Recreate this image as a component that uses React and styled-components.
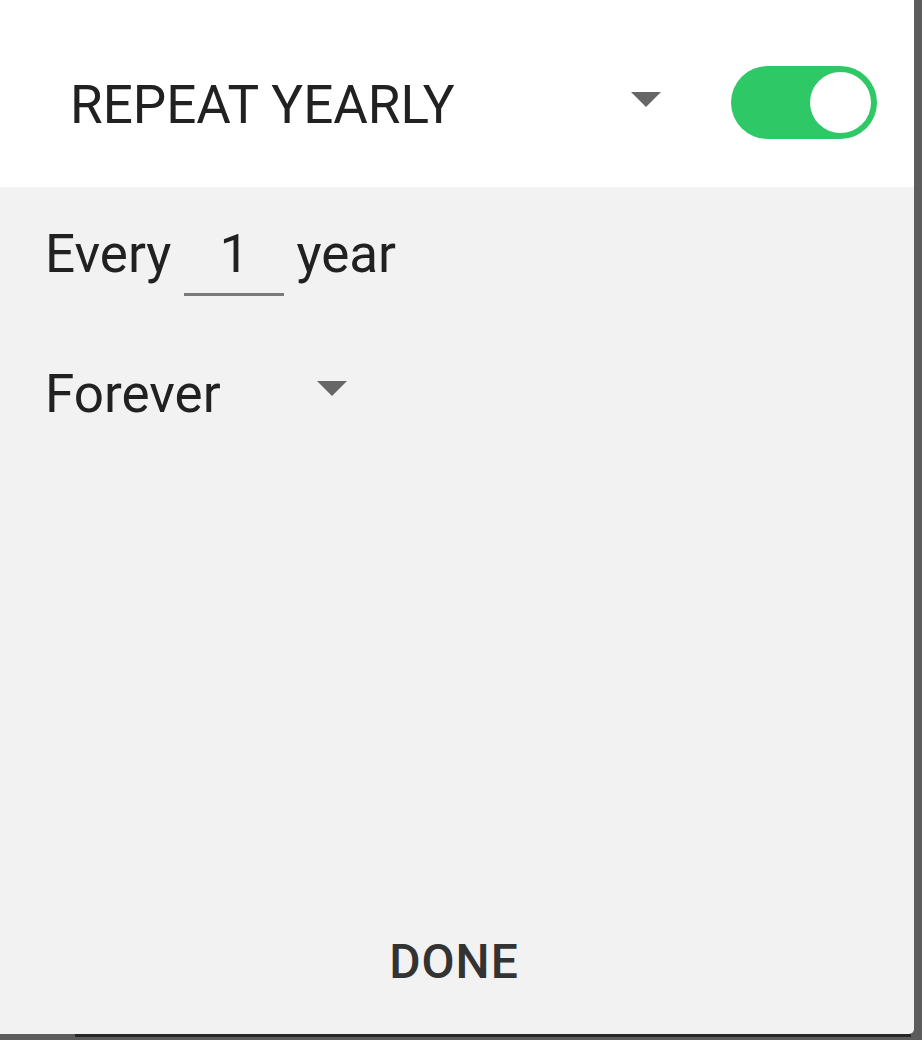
import styled, { createGlobalStyle } from "styled-components";

const GlobalStyle = createGlobalStyle`
  html, body {
    margin: 0;
    padding: 0;
    background: #5c5c5c;
  }
  body {
    font-family: Roboto, "Liberation Sans", sans-serif;
  }
`;

const Page = styled.div`
  width: 922px;
  height: 1040px;
  overflow: hidden;
  display: flex;
  flex-direction: column;
`;

const Dialog = styled.div`
  width: 914px;
  height: 1034px;
  background: #f2f2f2;
  border-bottom-right-radius: 5px;
  display: flex;
  flex-direction: column;
  flex-shrink: 0;
`;

const ShadowEdge = styled.div`
  margin-left: 75px;
  width: 836px;
  height: 3px;
  background: #262626;
`;

const Header = styled.div`
  height: 187px;
  background: #ffffff;
  display: flex;
  align-items: center;
  padding: 18px 37px 0 70px;
  box-sizing: border-box;
`;

const Title = styled.div`
  font-size: 53px;
  color: #212121;
  flex: 1;
  padding-top: 4px;
`;

const Caret = styled.span`
  display: block;
  width: 0;
  height: 0;
  border-left: 15px solid transparent;
  border-right: 15px solid transparent;
  border-top: 15px solid #666666;
  margin: ${(p) => p.$margin || "0"};
`;

const Toggle = styled.div`
  width: 146px;
  height: 73px;
  border-radius: 37px;
  background: #2ec866;
  display: flex;
  align-items: center;
  justify-content: flex-end;
  padding-right: 6px;
  box-sizing: border-box;
`;

const Knob = styled.div`
  width: 61px;
  height: 61px;
  border-radius: 50%;
  background: #ffffff;
`;

const Body = styled.div`
  flex: 1;
  display: flex;
  flex-direction: column;
  padding: 0 45px;
`;

const Row = styled.div`
  display: flex;
  align-items: ${(p) => p.$align || "baseline"};
  font-size: 53px;
  color: #212121;
  margin-top: ${(p) => p.$top};
`;

const NumberField = styled.div`
  width: 100px;
  margin: 0 12px 0 13px;
  text-align: center;
  border-bottom: 3px solid #7a7a7a;
  padding-bottom: 12px;
  line-height: 1;
`;

const Footer = styled.div`
  display: flex;
  justify-content: center;
  padding: 0 6px 44px 0;
`;

const DoneButton = styled.button`
  background: none;
  border: none;
  font-family: Roboto, "Liberation Sans", sans-serif;
  font-weight: 500;
  font-size: 48px;
  color: #333333;
  letter-spacing: 1px;
  padding: 0;
`;

export default function App() {
  return (
    <Page>
      <GlobalStyle />
      <Dialog>
        <Header>
          <Title>REPEAT YEARLY</Title>
          <Caret $margin="0 70px 6px 0" />
          <Toggle>
            <Knob />
          </Toggle>
        </Header>
        <Body>
          <Row $top="36px">
            Every
            <NumberField>1</NumberField>
            year
          </Row>
          <Row $align="center" $top="67px">
            Forever
            <Caret $margin="0 0 12px 96px" />
          </Row>
        </Body>
        <Footer>
          <DoneButton>DONE</DoneButton>
        </Footer>
      </Dialog>
      <ShadowEdge />
    </Page>
  );
}
